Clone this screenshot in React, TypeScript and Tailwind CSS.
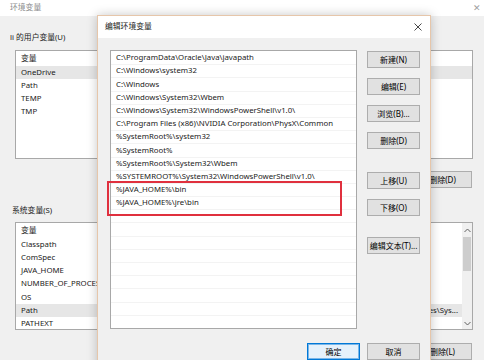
import type { ReactNode } from 'react';

const PATHS = [
  'C:\\ProgramData\\Oracle\\Java\\javapath',
  'C:\\Windows\\system32',
  'C:\\Windows',
  'C:\\Windows\\System32\\Wbem',
  'C:\\Windows\\System32\\WindowsPowerShell\\v1.0\\',
  'C:\\Program Files (x86)\\NVIDIA Corporation\\PhysX\\Common',
  '%SystemRoot%\\system32',
  '%SystemRoot%',
  '%SystemRoot%\\System32\\Wbem',
  '%SYSTEMROOT%\\System32\\WindowsPowerShell\\v1.0\\',
  '%JAVA_HOME%\\bin',
  '%JAVA_HOME%\\jre\\bin',
];

const USER_VARS = ['OneDrive', 'Path', 'TEMP', 'TMP'];
const SYS_VARS = ['Classpath', 'ComSpec', 'JAVA_HOME', 'NUMBER_OF_PROCES', 'OS', 'Path', 'PATHEXT'];

function WinButton({ children, primary = false, className = '' }: { children: ReactNode; primary?: boolean; className?: string }) {
  return (
    <div
      className={`flex h-[17px] w-[53px] shrink-0 items-center justify-center border text-[8px] leading-[10px] text-black ${
        primary ? 'border-[#0078d7] bg-[#e5f1fb] shadow-[inset_0_0_0_1px_#7ab6e8]' : 'border-[#adadad] bg-[#e1e1e1]'
      } ${className}`}
    >
      {children}
    </div>
  );
}

function Header() {
  return <div className="flex h-[15px] items-center pl-[5px]">变量</div>;
}

export default function App() {
  return (
    <div className="relative h-[360px] w-[484px] overflow-hidden bg-[#f0f0f0] font-['Noto_Sans','Noto_Sans_CJK_SC',sans-serif] text-[7.8px] text-[#1a1a1a]">
      {/* background window: 环境变量 */}
      <div className="flex h-[16px] items-center justify-between bg-white pl-[10px] pr-[3px] text-[#8c8c8c]">
        <span>环境变量</span>
        <span className="text-[9px] text-[#a0a0a0]">✕</span>
      </div>

      <div className="pl-[15px] pr-[11px]">
        <div className="-ml-[5px] mt-[16px] flex h-[12px] items-center text-[#1a1a1a]">li 的用户变量(U)</div>
        <div className="mt-[6px] h-[109px] border border-[#a8a8a8] bg-white">
          <Header />
          {USER_VARS.map((v, i) => (
            <div key={v} className={`flex h-[13.2px] items-center pl-[5px] ${i === 0 ? 'bg-[#e6e6e6]' : ''}`}>
              {v}
            </div>
          ))}
        </div>
        <div className="mt-[12px] flex justify-end pr-[1px]">
          <WinButton className="w-[40px] pr-[6px]">删除(D)</WinButton>
        </div>

        <div className="-ml-[3px] mt-[17px] flex h-[12px] items-center">系统变量(S)</div>
        <div className="mt-[5px] flex h-[108px] border border-[#a8a8a8] bg-white">
          <div className="flex-1 overflow-hidden">
            <Header />
            {SYS_VARS.map((v) => (
              <div key={v} className={`flex h-[13.2px] items-center pl-[5px] ${v === 'Path' ? 'bg-[#e6e6e6]' : ''}`}>
                <span className="w-[120px] shrink-0">{v}</span>
                {v === 'Path' && <span className="ml-auto whitespace-nowrap pr-[4px]">es\Sys...</span>}
              </div>
            ))}
          </div>
          <div className="flex w-[10px] flex-col bg-[#f0f0f0] text-[#606060]">
            <div className="flex h-[14px] items-center justify-center">
              <svg width="7" height="5" viewBox="0 0 7 5" fill="none" stroke="currentColor" strokeWidth="1">
                <path d="M0.5 4L3.5 1L6.5 4" />
              </svg>
            </div>
            <div className="mx-auto h-[34px] w-[8px] bg-[#cdcdcd]" />
            <div className="flex-1" />
            <div className="flex h-[12px] items-center justify-center">
              <svg width="7" height="5" viewBox="0 0 7 5" fill="none" stroke="currentColor" strokeWidth="1">
                <path d="M0.5 1L3.5 4L6.5 1" />
              </svg>
            </div>
          </div>
        </div>
        <div className="mt-[13px] flex justify-end pr-[1px]">
          <WinButton className="w-[40px] pr-[6px]">删除(L)</WinButton>
        </div>
      </div>

      {/* dialog: 编辑环境变量 */}
      <div className="absolute left-[97px] top-[15px] h-[360px] w-[334px] border border-[#e6c6aa] bg-[#f0f0f0] shadow-[0_0_10px_rgba(0,0,0,0.22)]">
        <div className="flex h-[22px] items-center justify-between bg-white pl-[7px] pr-[8px] text-[#1a1a1a]">
          <span>编辑环境变量</span>
          <svg width="8" height="8" viewBox="0 0 8 8" stroke="#333" strokeWidth="0.9">
            <path d="M0.5 0.5L7.5 7.5M7.5 0.5L0.5 7.5" />
          </svg>
        </div>
        <div className="flex pl-[12px] pr-[10px] pt-[12px]">
          <div className="h-[279px] w-[247px] overflow-hidden border border-[#a8a8a8] bg-white pt-[1px]">
            {Array.from({ length: 22 }).map((_, i) => (
              <div key={i} className="flex h-[13.2px] items-center whitespace-nowrap border-b border-[#f3f3f3] pl-[5px]">
                {PATHS[i] ?? ''}
              </div>
            ))}
          </div>
          <div className="ml-[10px] flex flex-col pt-[1px]">
            <WinButton>新建(N)</WinButton>
            <WinButton className="mt-[10px]">编辑(E)</WinButton>
            <WinButton className="mt-[10px]">浏览(B)...</WinButton>
            <WinButton className="mt-[10px]">删除(D)</WinButton>
            <WinButton className="mt-[23px]">上移(U)</WinButton>
            <WinButton className="mt-[10px]">下移(O)</WinButton>
            <WinButton className="mt-[21px]">编辑文本(T)...</WinButton>
          </div>
        </div>
        <div className="mt-[14px] flex justify-end gap-[7px] pr-[10px]">
          <WinButton primary>确定</WinButton>
          <WinButton>取消</WinButton>
        </div>
      </div>

      {/* red annotation box */}
      <div className="absolute left-[107px] top-[181px] h-[35px] w-[235px] border-2 border-[#e0303e]" />
    </div>
  );
}
